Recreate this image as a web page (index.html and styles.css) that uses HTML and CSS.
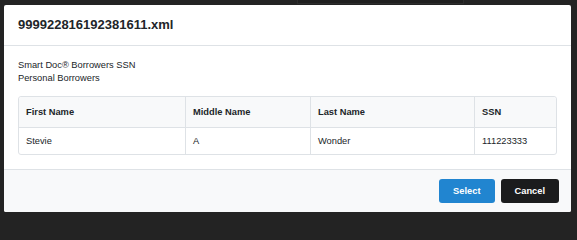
FILE: index.html
```html
<!DOCTYPE html>
<html lang="en">
<head>
<meta charset="utf-8">
<title>999922816192381611.xml</title>
<link rel="stylesheet" href="styles.css">
</head>
<body>
<div class="backdrop-strip"></div>
<div class="modal">
  <div class="modal-header">
    <h1 class="modal-title">999922816192381611.xml</h1>
  </div>
  <div class="modal-body">
    <div class="intro">
      <div>Smart Doc® Borrowers SSN</div>
      <div>Personal Borrowers</div>
    </div>
    <table class="grid">
      <colgroup>
        <col class="c1"><col class="c2"><col class="c3"><col class="c4">
      </colgroup>
      <thead>
        <tr><th>First Name</th><th>Middle Name</th><th>Last Name</th><th>SSN</th></tr>
      </thead>
      <tbody>
        <tr><td>Stevie</td><td>A</td><td>Wonder</td><td>111223333</td></tr>
      </tbody>
    </table>
  </div>
  <div class="modal-footer">
    <button class="btn btn-blue">Select</button>
    <button class="btn btn-black">Cancel</button>
  </div>
</div>
</body>
</html>
```

FILE: styles.css
```css
html, body {
  margin: 0;
  padding: 0;
}
body {
  background: #232323;
  font-family: "Liberation Sans", Arial, sans-serif;
  width: 577px;
  height: 218px;
  overflow: hidden;
  position: relative;
}
.backdrop-strip {
  position: absolute;
  left: 297px;
  top: -4px;
  width: 165px;
  height: 6px;
  border: 1px solid #2c2c2c;
  background: #1f1f1f;
}
.modal {
  position: relative;
  margin: 5px 0 0 4px;
  width: 567px;
  background: #fff;
  border-radius: 2px;
  overflow: hidden;
}
.modal-header {
  padding: 12px 14px;
  border-bottom: 1px solid #dee2e6;
}
.modal-title {
  margin: 0;
  font-size: 13px;
  line-height: 16px;
  font-weight: bold;
  color: #212529;
}
.modal-body {
  padding: 13px 14px 14px;
}
.intro {
  font-size: 9.3px;
  line-height: 13px;
  color: #212529;
  margin-bottom: 11px;
}
.grid {
  width: 100%;
  table-layout: fixed;
  border-collapse: separate;
  border-spacing: 0;
  border: 1px solid #dee2e6;
  border-radius: 3px;
  font-size: 9.3px;
  line-height: 12px;
  color: #212529;
}
.c1 { width: 166px; }
.c2 { width: 125px; }
.c3 { width: 164px; }
.grid th, .grid td {
  text-align: left;
  padding: 7px 7px;
  border-left: 1px solid #dee2e6;
}
.grid th:first-child, .grid td:first-child {
  border-left: none;
}
.grid th {
  background: #f8f9fa;
  font-weight: bold;
  padding-top: 9px;
  padding-bottom: 9px;
}
.grid th:first-child { border-top-left-radius: 3px; }
.grid th:last-child { border-top-right-radius: 3px; }
.grid td {
  border-top: 1px solid #dee2e6;
}
.modal-footer {
  display: flex;
  justify-content: flex-end;
  gap: 6px;
  padding: 9px 12px;
  background: #f8f9fa;
  border-top: 1px solid #dee2e6;
}
.btn {
  height: 24px;
  padding: 0 14px;
  border: none;
  border-radius: 3px;
  font-family: "Liberation Sans", Arial, sans-serif;
  font-size: 9.3px;
  font-weight: bold;
  color: #fff;
}
.btn-blue { background: #2185d0; }
.btn-black { background: #1b1c1d; }
```
